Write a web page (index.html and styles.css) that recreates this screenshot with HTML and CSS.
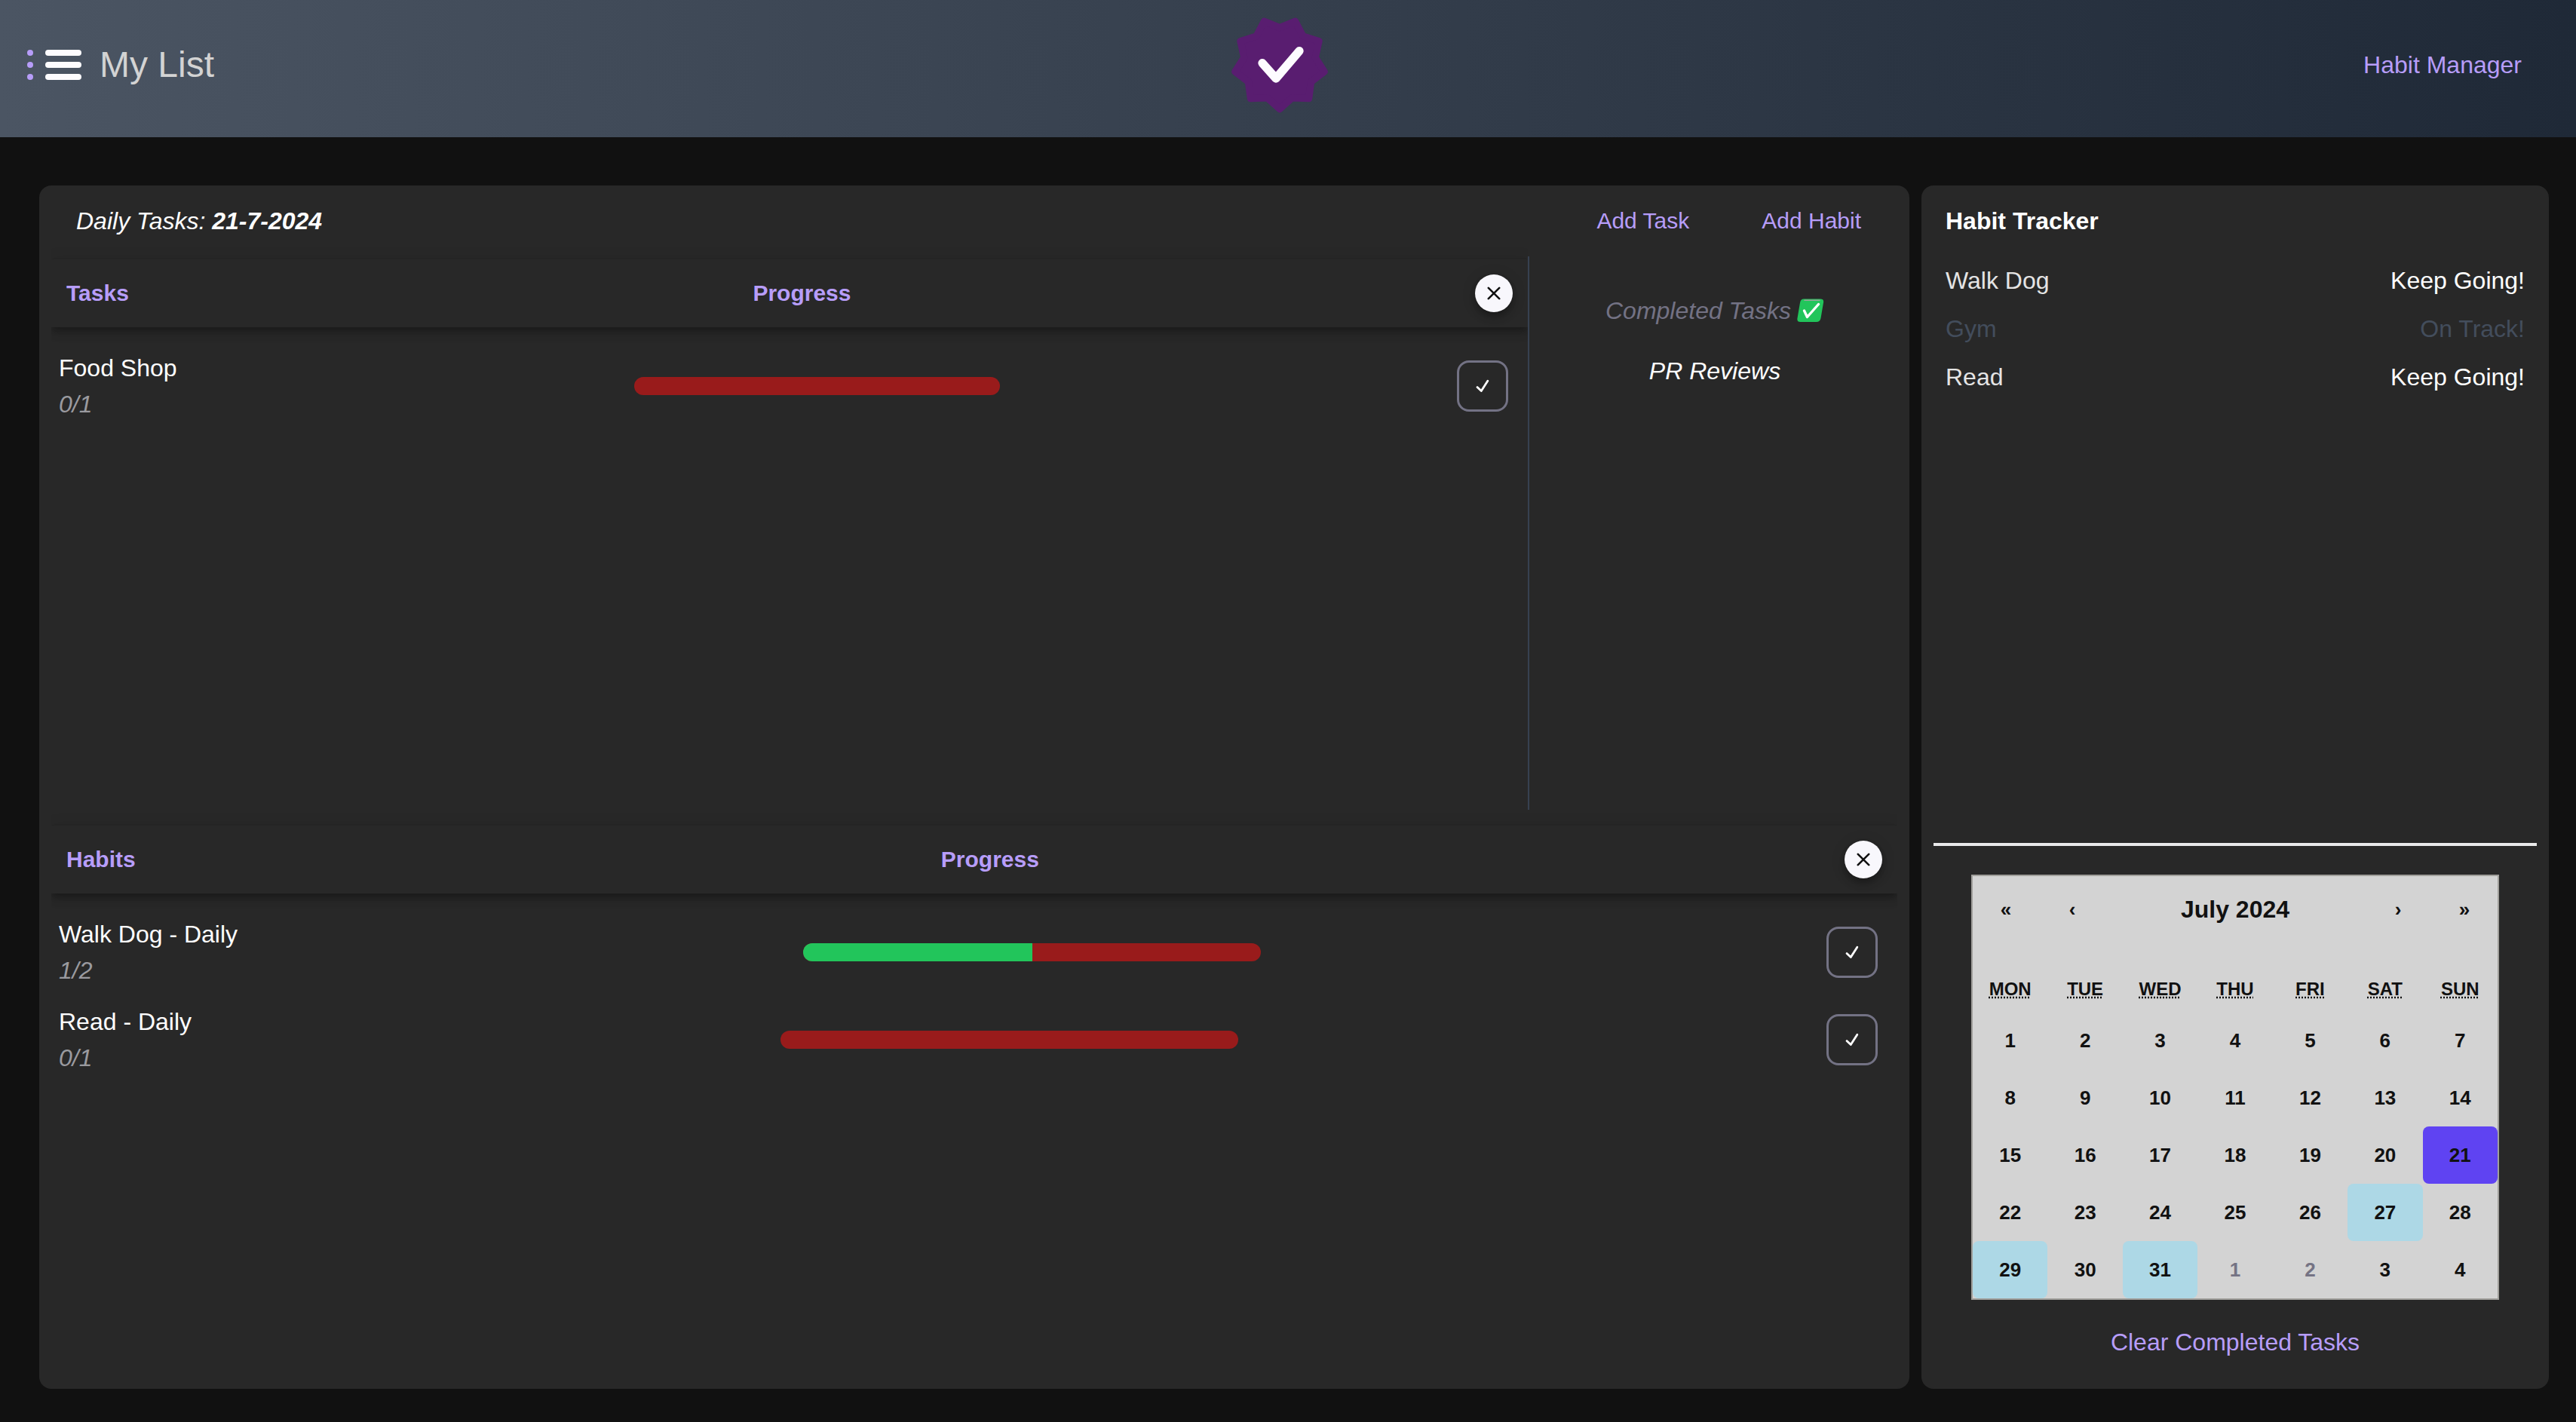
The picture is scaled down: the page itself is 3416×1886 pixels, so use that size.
FILE: index.html
```html
<!DOCTYPE html>
<html lang="en">
<head>
  <meta charset="UTF-8">
  <title>My List</title>
  <meta name="viewport" content="width=device-width, initial-scale=1.0">
  <link rel="stylesheet" href="styles.css">
</head>
<body>

<!-- icons shared by the buttons -->
<svg class="sprite" width="0" height="0">
  <symbol id="icon-close" viewBox="0 0 18 18">
    <path d="M1.8 1.8 16.2 16.2M16.2 1.8 1.8 16.2" fill="none" stroke="#111" stroke-width="2.6" stroke-linecap="round"/>
  </symbol>
  <symbol id="icon-check" viewBox="0 0 18 18">
    <path d="M2 10.6 7.3 15.6 15.8 2.2" fill="none" stroke="#fff" stroke-width="2.8" stroke-linecap="round" stroke-linejoin="round"/>
  </symbol>
</svg>

<header class="navbar">
  <div class="brand">
    <svg width="72" height="40" viewBox="0 0 72 40">
      <g fill="#b79df9">
        <circle cx="4" cy="4" r="4"/>
        <circle cx="4" cy="20" r="4"/>
        <circle cx="4" cy="36" r="4"/>
      </g>
      <g fill="#fdfcff">
        <rect x="24" y="0" width="48" height="8" rx="4"/>
        <rect x="24" y="16" width="48" height="8" rx="4"/>
        <rect x="24" y="32" width="48" height="8" rx="4"/>
      </g>
    </svg>
    <span class="brand-name">My List</span>
  </div>
  <svg class="logo" width="128" height="128" viewBox="219 66 384 384">
    <polygon fill="#591d70" stroke="#591d70" stroke-width="28" stroke-linejoin="round"
      points="411,434 361.7,389.3 295.3,391.9 286.3,326 233.7,285.3 269.2,229 255.1,164 318.4,143.7 349.4,84.9 411,110 472.6,84.9 503.6,143.7 566.9,164 552.8,229 588.3,285.3 535.7,326 526.7,391.9 460.3,389.3"/>
    <polyline points="342,251 396,312 489,203" fill="none" stroke="#fdfcff" stroke-width="34" stroke-linecap="round" stroke-linejoin="round"/>
  </svg>
  <a class="nav-link">Habit Manager</a>
</header>

<main class="layout">

  <section class="card board">
    <div class="board-top">
      <p class="date">Daily Tasks: <b>21-7-2024</b></p>
      <div class="actions">
        <a>Add Task</a>
        <a>Add Habit</a>
      </div>
    </div>

    <div class="board-middle">
      <div class="tasks">
        <div class="bar">
          <span>Tasks</span>
          <span>Progress</span>
          <button class="close"><svg width="18" height="18"><use href="#icon-close"/></svg></button>
        </div>
        <div class="rows">
          <div class="row">
            <div class="row-text">Food Shop<i>0/1</i></div>
            <div class="progress"><div class="done" style="width: 0%"></div></div>
            <button class="tick"><svg width="18" height="18"><use href="#icon-check"/></svg></button>
          </div>
        </div>
      </div>

      <div class="completed">
        <p class="completed-title">Completed Tasks
          <svg width="36" height="32" viewBox="0 0 36 32">
            <path d="M9 0.5H31Q36 0.5 35 5.5L31.5 26Q30.7 31 25.5 31H4.5Q-.4 31 .5 26L4 5.5Q4.8.5 9 .5Z" fill="#22c55b"/>
            <path d="M10 2.2H30" stroke="#9ba39b" stroke-width="1.6" stroke-linecap="round"/>
            <path d="M9.5 16 13.5 24.5 28.5 7.5" fill="none" stroke="#fff" stroke-width="3.4" stroke-linecap="round" stroke-linejoin="round"/>
          </svg>
        </p>
        <p>PR Reviews</p>
      </div>
    </div>

    <div class="habits">
      <div class="bar">
        <span>Habits</span>
        <span>Progress</span>
        <button class="close"><svg width="18" height="18"><use href="#icon-close"/></svg></button>
      </div>
      <div class="rows">
        <div class="row">
          <div class="row-text">Walk Dog - Daily<i>1/2</i></div>
          <div class="progress"><div class="done" style="width: 50%"></div></div>
          <button class="tick"><svg width="18" height="18"><use href="#icon-check"/></svg></button>
        </div>
        <div class="row">
          <div class="row-text">Read - Daily<i>0/1</i></div>
          <div class="progress"><div class="done" style="width: 0%"></div></div>
          <button class="tick"><svg width="18" height="18"><use href="#icon-check"/></svg></button>
        </div>
      </div>
    </div>
  </section>

  <aside class="card sidebar">
    <h2>Habit Tracker</h2>
    <ul class="tracker">
      <li><span>Walk Dog</span><span>Keep Going!</span></li>
      <li class="on-track"><span>Gym</span><span>On Track!</span></li>
      <li><span>Read</span><span>Keep Going!</span></li>
    </ul>

    <div class="calendar">
      <div class="cal-nav">
        <button>«</button>
        <button>‹</button>
        <span class="cal-label">July 2024</span>
        <button>›</button>
        <button>»</button>
      </div>
      <div class="cal-grid weekdays">
        <abbr>Mon</abbr><abbr>Tue</abbr><abbr>Wed</abbr><abbr>Thu</abbr><abbr>Fri</abbr><abbr>Sat</abbr><abbr>Sun</abbr>
      </div>
      <div class="cal-grid days">
        <span>1</span><span>2</span><span>3</span><span>4</span><span>5</span><span>6</span><span>7</span>
        <span>8</span><span>9</span><span>10</span><span>11</span><span>12</span><span>13</span><span>14</span>
        <span>15</span><span>16</span><span>17</span><span>18</span><span>19</span><span>20</span><span class="today">21</span>
        <span>22</span><span>23</span><span>24</span><span>25</span><span>26</span><span class="marked">27</span><span>28</span>
        <span class="marked">29</span><span>30</span><span class="marked">31</span><span class="other">1</span><span class="other">2</span><span>3</span><span>4</span>
      </div>
    </div>

    <a class="clear">Clear Completed Tasks</a>
  </aside>

</main>

</body>
</html>
```

FILE: styles.css
```css
* {
  box-sizing: border-box;
  margin: 0;
  padding: 0;
}

body {
  font-family: "Liberation Sans", Arial, Helvetica, sans-serif;
  font-size: 32px;
  line-height: 48px;
  background: #111;
  color: #fff;
}

a { color: #b79df9; }

button {
  font: inherit;
  color: inherit;
  border: none;
  background: none;
}

.sprite { display: block; }

/* header */
.navbar {
  display: grid;
  grid-template-columns: 1fr auto 1fr;
  align-items: center;
  height: 182px;
  padding: 0 58px 0 36px;
  background: linear-gradient(to right, #4b5563, #1f2937);
}

.brand {
  display: flex;
  align-items: center;
  gap: 24px;
}

.brand-name {
  font-size: 48px;
  color: #d3d3d3;
}

.brand, .nav-link { padding-bottom: 10px; }
.logo { margin-bottom: 10px; }

.nav-link {
  justify-self: end;
  margin-right: 14px;
}

/* page */
.layout {
  display: flex;
  gap: 16px;
  height: 1660px;
  padding: 64px 36px 0 52px;
}

.card {
  background: #282828;
  border-radius: 16px;
  padding: 0 16px;
}

.board { width: 2480px; }

.board-top {
  display: flex;
  justify-content: space-between;
  align-items: center;
  height: 94px;
  padding: 0 48px 0 33px;
}

.date { font-style: italic; }

.actions {
  display: flex;
  gap: 96px;
  font-size: 30px;
}

.board-middle {
  display: flex;
  height: 734px;
}

.tasks {
  width: 1960px;
  padding-top: 4px;
  border-right: 2px solid #374151;
}

.bar {
  display: flex;
  justify-content: space-between;
  align-items: center;
  height: 90px;
  padding: 0 20px;
  font-size: 30px;
  font-weight: bold;
  color: #b79df9;
  box-shadow: 0 4px 8px -2px rgba(0, 0, 0, .2), 0 8px 10px rgba(0, 0, 0, .14), 0 2px 20px rgba(0, 0, 0, .12);
  clip-path: inset(-20px 0 -32px 0);
}

.close {
  display: flex;
  align-items: center;
  justify-content: center;
  width: 50px;
  height: 50px;
  border-radius: 50%;
  background: #f8f7fc;
  box-shadow: 0 4px 8px -2px rgba(0, 0, 0, .2), 0 8px 10px rgba(0, 0, 0, .14), 0 2px 20px rgba(0, 0, 0, .12);
}

.rows {
  display: flex;
  flex-direction: column;
  gap: 20px;
  padding: 30px 26px 0 10px;
}

.row {
  display: flex;
  justify-content: space-between;
  align-items: center;
}

.row-text i {
  display: block;
  color: #9a9a9f;
}

.progress {
  width: 485px;
  height: 24px;
  border-radius: 12px;
  background: #991b1b;
  overflow: hidden;
}

.habits .progress { width: 607px; }

.done {
  height: 100%;
  background: #22c55b;
}

.tick {
  display: flex;
  align-items: center;
  justify-content: center;
  width: 68px;
  height: 68px;
  border: 3px solid #737284;
  border-radius: 16px;
}

.completed {
  display: flex;
  flex-direction: column;
  align-items: center;
  gap: 32px;
  flex: 1;
  padding: 48px 0 0 4px;
  font-style: italic;
}

.completed-title {
  display: flex;
  align-items: center;
  gap: 8px;
  color: #737284;
}

.habits { margin-top: 21px; }

/* sidebar */
.sidebar {
  width: 832px;
  display: flex;
  flex-direction: column;
  align-items: center;
}

.sidebar h2 {
  align-self: stretch;
  padding-left: 16px;
  font-size: 32px;
  line-height: 94px;
}

.tracker {
  align-self: stretch;
  height: 782px;
  padding: 0 16px;
  list-style: none;
  border-bottom: 4px solid #e9e9ea;
}

.tracker li {
  display: flex;
  justify-content: space-between;
  line-height: 64px;
}

.tracker li span:first-child { color: #e4e4e4; }
.tracker .on-track span, .tracker .on-track span:first-child { color: #434d5c; }

/* calendar */
.calendar {
  width: 700px;
  margin-top: 38px;
  border: 2px solid #a09f9b;
  background: #d3d3d3;
  color: #111;
  font-weight: bold;
}

.cal-nav {
  display: flex;
  height: 88px;
  margin-bottom: 32px;
  line-height: 88px;
}

.cal-nav button {
  width: 88px;
  font-size: 26px;
}

.cal-label {
  flex: 1;
  text-align: center;
}

.cal-grid {
  display: grid;
  grid-template-columns: repeat(7, 1fr);
  text-align: center;
}

.weekdays {
  font-size: 24px;
  line-height: 60px;
  text-transform: uppercase;
}

.weekdays abbr { text-decoration: underline dotted; }

.days {
  font-size: 26px;
  line-height: 76px;
}

.days span { border-radius: 8px; }
.days .today { background: #5f43f2; }
.days .marked { background: #add8e6; }
.days .other { color: #757384; }

.clear { margin-top: 32px; }
```
